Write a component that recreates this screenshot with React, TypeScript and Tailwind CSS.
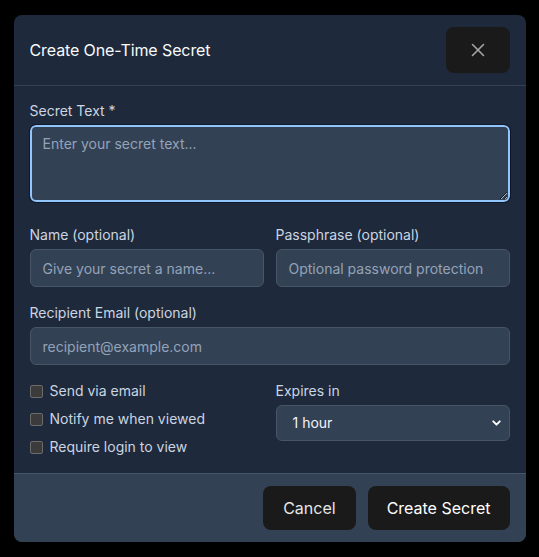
import { X, ChevronDown } from 'lucide-react'

const labelCls = 'block text-sm leading-5 text-[#cbd5e1] mb-1'
const inputCls =
  'block w-full h-[38px] rounded-md border border-[#475569] bg-[#334155] px-3 text-sm text-[#f1f5f9] placeholder:text-[#94a3b8] outline-none'

function Check({ label }: { label: string }) {
  return (
    <label className="flex items-center h-5 text-sm text-[#cbd5e1]">
      <span className="w-[13px] h-[13px] rounded-[2px] border border-[#6b6b6b] bg-[#3b3b3b] mr-[7px]" />
      {label}
    </label>
  )
}

export default function App() {
  return (
    <div className="min-h-screen bg-black flex items-center justify-center font-['Inter',sans-serif]">
      <div className="w-[512px] rounded-lg bg-[#1e293b] overflow-hidden">
        {/* Header */}
        <div className="flex items-center justify-between px-4 py-3 border-b border-[#334155]">
          <h2 className="text-base font-normal tracking-[-0.1px] text-[#f8fafc]">Create One-Time Secret</h2>
          <button className="flex items-center justify-center w-[64px] h-[46px] rounded-lg bg-[#1a1a1a] text-[#a3a3a3]">
            <X size={22} strokeWidth={1.75} />
          </button>
        </div>

        {/* Body */}
        <div className="px-4 pt-[15px] pb-4">
          <label className={labelCls}>Secret Text *</label>
          <textarea
            className="block w-full h-[77px] rounded-md border-2 border-[#93c5fd] bg-[#334155] px-[11px] py-[7px] text-sm text-[#f1f5f9] placeholder:text-[#94a3b8] outline outline-1 outline-[#0f172a] mb-[23px]"
            placeholder="Enter your secret text..."
          />

          <div className="grid grid-cols-2 gap-3 mb-4">
            <div>
              <label className={labelCls}>Name (optional)</label>
              <input className={inputCls} placeholder="Give your secret a name..." />
            </div>
            <div>
              <label className={labelCls}>Passphrase (optional)</label>
              <input className={inputCls} placeholder="Optional password protection" />
            </div>
          </div>

          <div className="mb-4">
            <label className={labelCls}>Recipient Email (optional)</label>
            <input className={inputCls} placeholder="recipient@example.com" />
          </div>

          <div className="grid grid-cols-2 gap-3">
            <div className="flex flex-col gap-2">
              <Check label="Send via email" />
              <Check label="Notify me when viewed" />
              <Check label="Require login to view" />
            </div>
            <div>
              <label className={labelCls}>Expires in</label>
              <div className="relative h-9 rounded-md border border-[#475569] bg-[#334155] flex items-center pl-4 text-sm text-[#f1f5f9]">
                1 hour
                <ChevronDown
                  size={13}
                  strokeWidth={3.5}
                  className="absolute right-[6px] top-1/2 -translate-y-1/2 text-white"
                />
              </div>
            </div>
          </div>
        </div>

        {/* Footer */}
        <div className="flex justify-end gap-3 px-4 py-3 bg-[#334155] border-t border-[#475569]">
          <button className="h-[44px] px-5 rounded-lg bg-[#1a1a1a] text-base font-normal text-[#e5e5e5]">
            Cancel
          </button>
          <button className="h-[44px] px-[19px] rounded-lg bg-[#1a1a1a] text-base font-normal text-white">
            Create Secret
          </button>
        </div>
      </div>
    </div>
  )
}
